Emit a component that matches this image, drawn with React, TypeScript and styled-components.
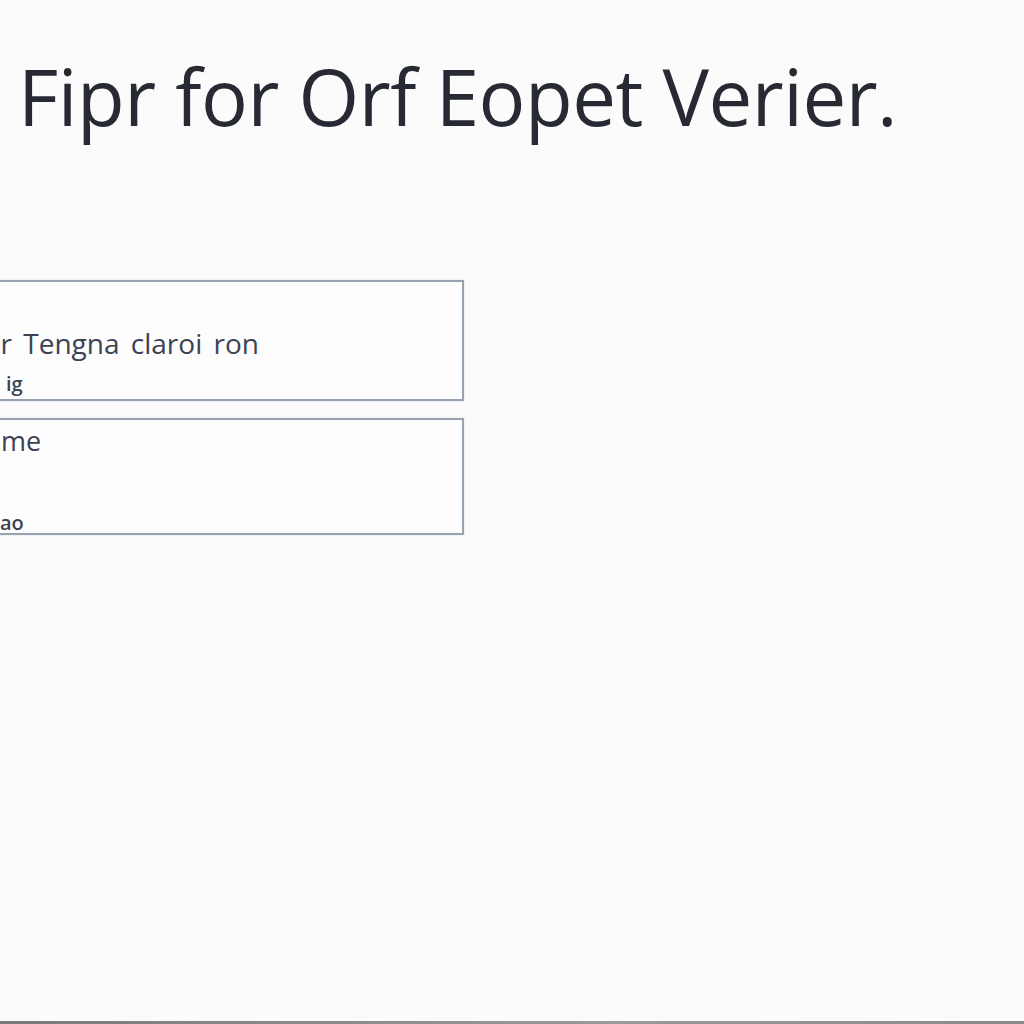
import React from 'react';
import styled, { createGlobalStyle } from 'styled-components';

const GlobalStyle = createGlobalStyle`
  html, body {
    margin: 0;
    padding: 0;
    background: #fbfbfb;
    overflow: hidden;
  }
`;

type Entry = {
  title: string;
  note: string;
  tall?: boolean;
};

const entries: Entry[] = [
  { title: 'ar Tengna claroi ron', note: 'ig' },
  { title: 'ame', note: 'ao', tall: true },
];

export default function App(): JSX.Element {
  return (
    <Page>
      <GlobalStyle />
      <Heading>Fipr for Orf Eopet Verier.</Heading>
      <CardList>
        {entries.map((entry) => (
          <Card key={entry.title} $tall={entry.tall}>
            <CardTitle $tall={entry.tall}>{entry.title}</CardTitle>
            <CardNote $tall={entry.tall}>{entry.note}</CardNote>
          </Card>
        ))}
      </CardList>
      <Footer />
    </Page>
  );
}

const Page = styled.main`
  height: 1024px;
  display: flex;
  flex-direction: column;
  font-family: 'Open Sans', 'Liberation Sans', sans-serif;
  color: #272a33;
`;

const Heading = styled.h1`
  margin: 0;
  padding: 46px 0 0 18px;
  font-size: 78px;
  font-weight: 400;
  line-height: 100px;
  letter-spacing: -0.5px;
  white-space: nowrap;
`;

const CardList = styled.section`
  display: flex;
  flex-direction: column;
  gap: 17px;
  margin: 134px 0 0 -60px;
  width: 524px;
`;

const Card = styled.article<{ $tall?: boolean }>`
  display: flex;
  flex-direction: column;
  justify-content: ${({ $tall }) => ($tall ? 'space-between' : 'flex-start')};
  height: ${({ $tall }) => ($tall ? '117px' : '121px')};
  padding: ${({ $tall }) => ($tall ? '4px 0 0 0' : '44px 0 0 0')};
  box-sizing: border-box;
  border: 2px solid #98a3b2;
  background: #fdfdfd;
  box-shadow: 0 0 2px rgba(120, 140, 170, 0.25);
  color: #3b4352;
`;

const CardTitle = styled.div<{ $tall?: boolean }>`
  padding-left: ${({ $tall }) => ($tall ? '44px' : '43px')};
  font-size: ${({ $tall }) => ($tall ? '27px' : '28px')};
  line-height: 34px;
  word-spacing: 4px;
  white-space: nowrap;
`;

const CardNote = styled.div<{ $tall?: boolean }>`
  margin-top: ${({ $tall }) => ($tall ? '0' : '10px')};
  padding-left: ${({ $tall }) => ($tall ? '58px' : '64px')};
  font-size: 20px;
  line-height: ${({ $tall }) => ($tall ? '20px' : '28px')};
  font-weight: 600;
`;

const Footer = styled.footer`
  margin-top: auto;
  height: 3px;
  background: linear-gradient(90deg, #7a7a7a, #9a9a9a 60%, #8a8a8a);
`;
